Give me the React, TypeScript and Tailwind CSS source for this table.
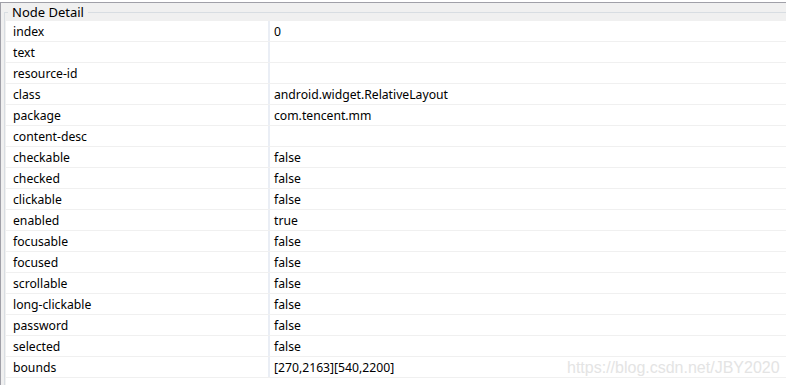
const ROWS: [string, string][] = [
  ["index", "0"],
  ["text", ""],
  ["resource-id", ""],
  ["class", "android.widget.RelativeLayout"],
  ["package", "com.tencent.mm"],
  ["content-desc", ""],
  ["checkable", "false"],
  ["checked", "false"],
  ["clickable", "false"],
  ["enabled", "true"],
  ["focusable", "false"],
  ["focused", "false"],
  ["scrollable", "false"],
  ["long-clickable", "false"],
  ["password", "false"],
  ["selected", "false"],
  ["bounds", "[270,2163][540,2200]"],
];

export default function App() {
  return (
    <div className="relative h-[385px] w-[786px] overflow-hidden bg-white pt-[2px] font-['Noto_Sans','Noto_Sans_CJK_SC',sans-serif] text-[12.2px] text-black">
      <div className="flex h-full flex-col border-t border-l border-[#a0a0a8] bg-[#f0f0f0] pl-[3px]">
        {/* Node Detail group */}
        <fieldset className="mt-[2px] flex min-h-0 flex-1 flex-col border-t border-l border-[#d8dde2] pl-[1px]">
          <legend className="ml-[2px] px-[4px] text-[13px] leading-[15px]">Node Detail</legend>
          <div className="mt-[1px] flex-1 bg-white">
            {ROWS.map(([k, v]) => (
              <div key={k} className="flex h-[21px] border-b border-[#f0f0f0]">
                <div className="w-[262px] shrink-0 pl-[7px] leading-[21px]">{k}</div>
                <div className="w-[2px] shrink-0 bg-[#eaeef5]" />
                <div className="flex-1 pl-[4px] leading-[21px]">{v}</div>
              </div>
            ))}
          </div>
        </fieldset>
      </div>
      <span className="absolute left-[567px] top-[356px] font-['Liberation_Sans',sans-serif] text-[16px] text-[#e4e4e4]">
        https://blog.csdn.net/JBY2020
      </span>
    </div>
  );
}
